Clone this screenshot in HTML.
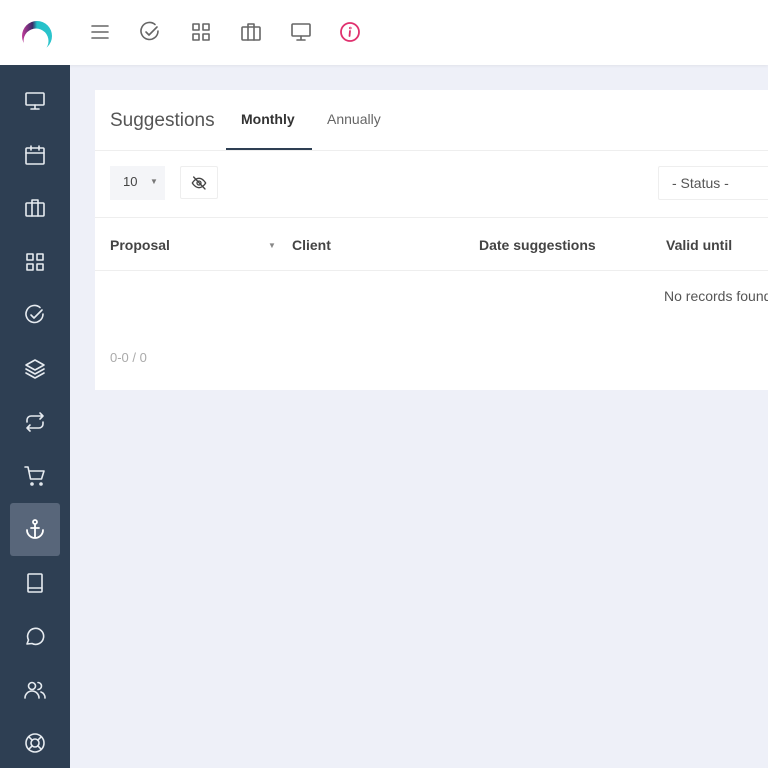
<!DOCTYPE html>
<html><head><style>
*{margin:0;padding:0;box-sizing:border-box}
body{width:768px;height:768px;overflow:hidden;background:#eef0f8;font-family:"Liberation Sans",sans-serif;position:relative}
.hdr{position:absolute;left:0;top:0;width:768px;height:65px;background:#fff;box-shadow:0 1px 3px rgba(0,0,0,.06)}
.side{position:absolute;left:0;top:65px;width:70px;height:703px;background:#2e3f53}
.si{position:absolute;left:23px;width:24px;height:24px}
.act{position:absolute;left:10px;top:503px;width:50px;height:53px;background:#58667a;border-radius:3px}
.ti{position:absolute;top:20px;width:24px;height:24px}
.card{position:absolute;left:95px;top:90px;width:673px;height:300px;background:#fff}
.t{position:absolute;white-space:nowrap}
svg{fill:none;stroke-linecap:round;stroke-linejoin:round}
</style></head><body>
<div class="hdr">
<svg style="position:absolute;left:20px;top:20px" width="34" height="34" viewBox="0 0 34 34">
<defs><linearGradient id="g" x1="0" y1="0" x2="1" y2="0"><stop offset="0" stop-color="#c23a9a"/><stop offset=".35" stop-color="#3a2a66"/><stop offset=".5" stop-color="#22c0c8"/><stop offset="1" stop-color="#2cc4cc"/></linearGradient></defs>
<circle cx="17" cy="16" r="15" fill="url(#g)"/>
<circle cx="16" cy="21" r="12.5" fill="#fff"/>
</svg>
<svg class="ti" style="left:88px" viewBox="0 0 24 24" stroke="#666" stroke-width="1.6"><path d="M4 6h16M4 12h16M4 18h16"/></svg>
<svg class="ti" style="left:138px" viewBox="0 0 24 24" stroke="#666" stroke-width="1.6"><path d="M20 11a8.5 8.5 0 1 1-3-6.5"/><path d="M8 12l3 3 8-8"/></svg>
<svg class="ti" style="left:189px" viewBox="0 0 24 24" stroke="#666" stroke-width="1.6"><rect x="4" y="4" width="6" height="6"/><rect x="14" y="4" width="6" height="6"/><rect x="4" y="14" width="6" height="6"/><rect x="14" y="14" width="6" height="6"/></svg>
<svg class="ti" style="left:239px" viewBox="0 0 24 24" stroke="#666" stroke-width="1.6"><rect x="3" y="7" width="18" height="13" rx="1"/><path d="M9 7V4h6v3M9 7v13M15 7v13"/></svg>
<svg class="ti" style="left:289px" viewBox="0 0 24 24" stroke="#666" stroke-width="1.6"><rect x="3" y="4" width="18" height="12" rx="1"/><path d="M12 16v4M8 20h8"/></svg>
<svg class="ti" style="left:338px" viewBox="0 0 24 24" stroke="#e0306e" stroke-width="1.8"><circle cx="12" cy="12" r="9"/><path d="M12 11l-.5 5"/><circle cx="12.3" cy="8" r=".4"/></svg>
</div>
<div class="side">
<div class="act" style="top:438px"></div>
<svg class="si" style="top:24px" viewBox="0 0 24 24" stroke="#e6ebf0" stroke-width="1.6"><rect x="3" y="4" width="18" height="12" rx="1"/><path d="M12 16v4M8 20h8"/></svg>
<svg class="si" style="top:78px" viewBox="0 0 24 24" stroke="#e6ebf0" stroke-width="1.6"><rect x="3" y="5" width="18" height="16" rx="1"/><path d="M3 10h18M8 3v4M16 3v4"/></svg>
<svg class="si" style="top:131px" viewBox="0 0 24 24" stroke="#e6ebf0" stroke-width="1.6"><rect x="3" y="7" width="18" height="13" rx="1"/><path d="M9 7V4h6v3M9 7v13M15 7v13"/></svg>
<svg class="si" style="top:185px" viewBox="0 0 24 24" stroke="#e6ebf0" stroke-width="1.6"><rect x="4" y="4" width="6" height="6"/><rect x="14" y="4" width="6" height="6"/><rect x="4" y="14" width="6" height="6"/><rect x="14" y="14" width="6" height="6"/></svg>
<svg class="si" style="top:238px" viewBox="0 0 24 24" stroke="#e6ebf0" stroke-width="1.6"><path d="M20 11a8.5 8.5 0 1 1-3-6.5"/><path d="M8 12l3 3 8-8"/></svg>
<svg class="si" style="top:292px" viewBox="0 0 24 24" stroke="#e6ebf0" stroke-width="1.6"><path d="M12 3l9 5-9 5-9-5z"/><path d="M3 12l9 5 9-5M3 16l9 5 9-5"/></svg>
<svg class="si" style="top:345px" viewBox="0 0 24 24" stroke="#e6ebf0" stroke-width="1.6"><path d="M17 3l3 3-3 3M4 12v-2a4 4 0 0 1 4-4h12M7 21l-3-3 3-3M20 12v2a4 4 0 0 1-4 4H4"/></svg>
<svg class="si" style="top:399px" viewBox="0 0 24 24" stroke="#e6ebf0" stroke-width="1.6"><path d="M2 3h3l2.5 12h11L21 7H6"/><circle cx="9" cy="20" r="1"/><circle cx="18" cy="20" r="1"/></svg>
<svg class="si" style="top:452px" viewBox="0 0 24 24" stroke="#fff" stroke-width="1.8"><circle cx="12" cy="5" r="2"/><path d="M12 7v14M4 13a8 8 0 0 0 16 0M8 11h8"/></svg>
<svg class="si" style="top:506px" viewBox="0 0 24 24" stroke="#e6ebf0" stroke-width="1.6"><rect x="5" y="3" width="14" height="18" rx="1"/><path d="M5 17h14"/></svg>
<svg class="si" style="top:559px" viewBox="0 0 24 24" stroke="#e6ebf0" stroke-width="1.6"><path d="M4 20l1.5-4A8 8 0 1 1 9 19.5z"/></svg>
<svg class="si" style="top:613px" viewBox="0 0 24 24" stroke="#e6ebf0" stroke-width="1.6"><circle cx="9" cy="8" r="3.5"/><path d="M2 20a7 7 0 0 1 14 0M15 4.5a3.5 3.5 0 0 1 0 7M18 14a6 6 0 0 1 4 6"/></svg>
<svg class="si" style="top:666px" viewBox="0 0 24 24" stroke="#e6ebf0" stroke-width="1.6"><circle cx="12" cy="12" r="9"/><circle cx="12" cy="12" r="4"/><path d="M5.6 5.6l3.6 3.6M18.4 5.6l-3.6 3.6M5.6 18.4l3.6-3.6M18.4 18.4l-3.6-3.6"/></svg>
</div>
<div class="card">
<div class="t" style="left:15px;top:20px;font-size:19px;color:#555">Suggestions</div>
<div class="t" style="left:146px;top:21px;font-size:14px;font-weight:bold;color:#333">Monthly</div>
<div style="position:absolute;left:131px;top:58px;width:86px;height:2px;background:#2e3f53"></div>
<div class="t" style="left:232px;top:21px;font-size:14px;color:#666">Annually</div>
<div style="position:absolute;left:0;top:60px;width:673px;height:1px;background:#eee"></div>
<div style="position:absolute;left:15px;top:76px;width:55px;height:34px;background:#f4f5f8"></div>
<div class="t" style="left:28px;top:84px;font-size:13px;color:#444">10</div>
<div class="t" style="left:55px;top:87px;font-size:8px;color:#777">▼</div>
<div style="position:absolute;left:85px;top:76px;width:38px;height:33px;border:1px solid #eee;border-radius:2px"></div>
<svg style="position:absolute;left:96px;top:85px" width="16" height="16" viewBox="0 0 24 24" stroke="#444" stroke-width="2"><path d="M2 12s4-7 10-7 10 7 10 7-4 7-10 7S2 12 2 12z"/><circle cx="12" cy="12" r="3"/><path d="M4 3l17 18"/></svg>
<div style="position:absolute;left:563px;top:76px;width:120px;height:34px;border:1px solid #eee;border-radius:2px"></div>
<div class="t" style="left:577px;top:85px;font-size:14px;color:#555">- Status -</div>
<div style="position:absolute;left:0;top:127px;width:673px;height:1px;background:#eee"></div>
<div class="t" style="left:15px;top:147px;font-size:14px;font-weight:bold;color:#444">Proposal</div>
<div class="t" style="left:173px;top:151px;font-size:8px;color:#888">▼</div>
<div class="t" style="left:197px;top:147px;font-size:14px;font-weight:bold;color:#444">Client</div>
<div class="t" style="left:384px;top:147px;font-size:14px;font-weight:bold;color:#444">Date suggestions</div>
<div class="t" style="left:571px;top:147px;font-size:14px;font-weight:bold;color:#444">Valid until</div>
<div style="position:absolute;left:0;top:180px;width:673px;height:1px;background:#eee"></div>
<div class="t" style="left:569px;top:198px;font-size:14px;color:#555">No records found</div>
<div class="t" style="left:15px;top:260px;font-size:13px;color:#aaa">0-0 / 0</div>
</div>
</body></html>
